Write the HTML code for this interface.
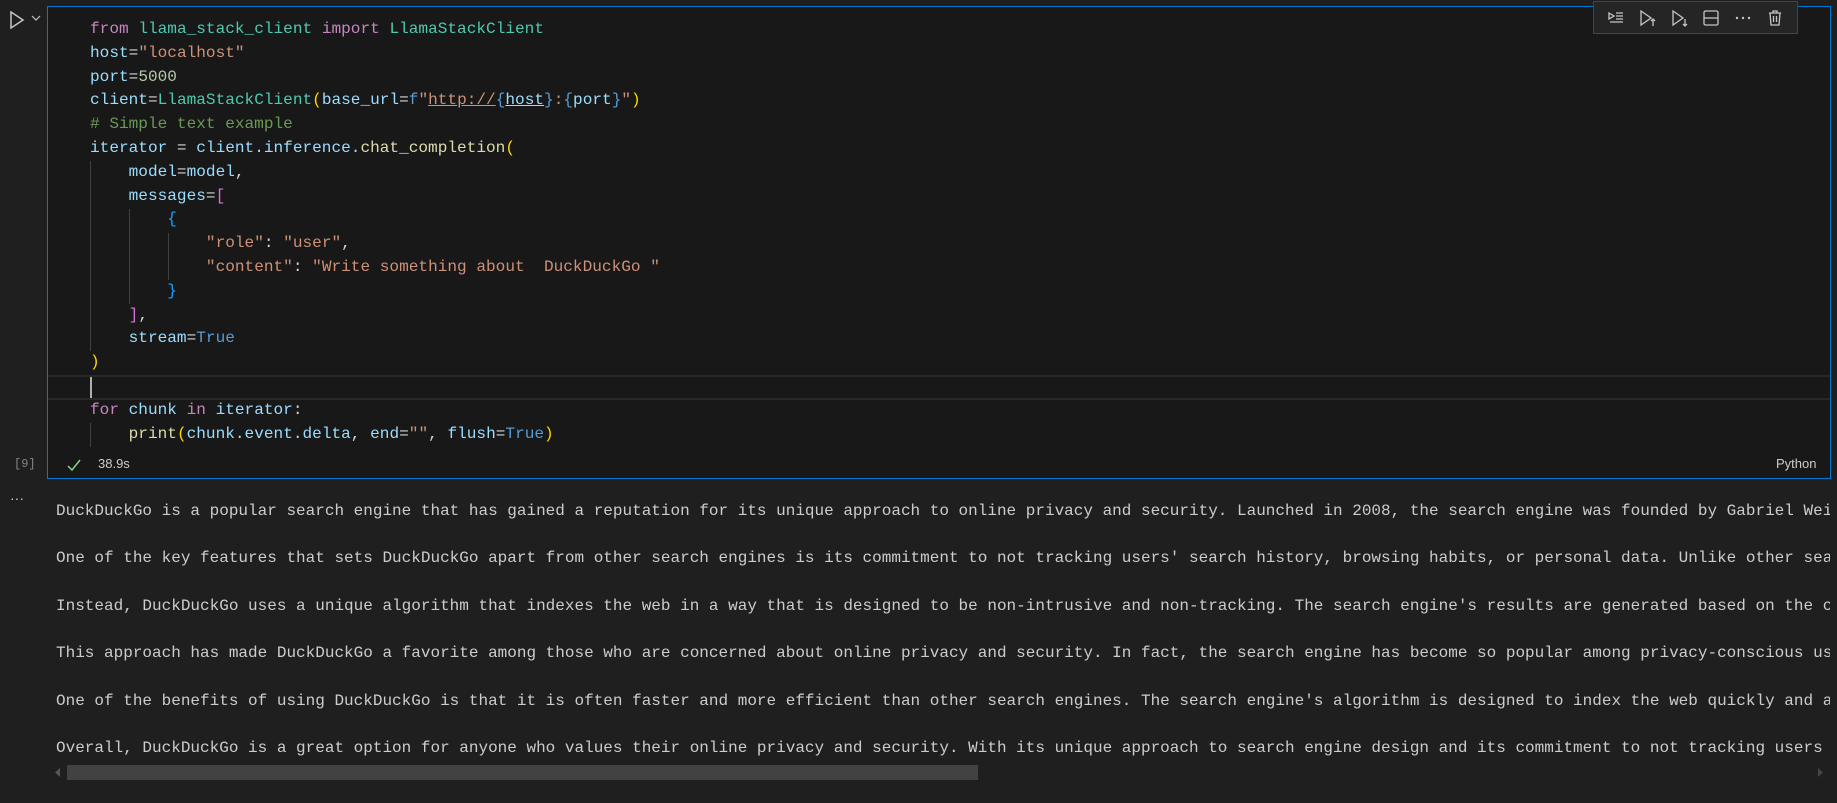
<!DOCTYPE html>
<html><head><meta charset="utf-8">
<style>
*{margin:0;padding:0;box-sizing:border-box}
body{width:1837px;height:803px;background:#1f1f1f;overflow:hidden;position:relative;font-family:"Liberation Mono",monospace}
.cell{position:absolute;left:47px;top:6px;width:1784px;height:473px;border:1px solid #0078d4;background:#181818}
.code{position:absolute;left:90px;top:18px;font-size:16.1px;line-height:23.8px;white-space:pre;color:#9cdcfe}
.k{color:#c586c0}.c{color:#4ec9b0}.s{color:#ce9178}.n{color:#b5cea8}.cm{color:#6a9955}.f{color:#dcdcaa}
.y{color:#ffd700}.p{color:#da70d6}.b{color:#179fff}.t{color:#569cd6}.o{color:#d4d4d4}
.u{text-decoration:underline}
.guide{position:absolute;width:1px;background:#404040}
.curline{position:absolute;left:48px;width:1782px;top:375px;height:25px;border-top:2px solid #282828;border-bottom:2px solid #282828}
.out{position:absolute;left:56px;top:488px;width:1774px;font-size:16.0px;line-height:47.4px;white-space:pre;color:#cccccc;overflow:hidden}
.tb{position:absolute;left:1593px;top:1px;width:205px;height:33px;background:#252526;border:1px solid #454545;display:flex;align-items:center;justify-content:space-around;padding:0 6px}
.tb svg{width:20px;height:20px}
.small{font-family:"Liberation Sans",sans-serif;font-size:13px;color:#cccccc;position:absolute}
</style></head><body>
<svg style="position:absolute;left:8px;top:10px" width="18" height="20" viewBox="0 0 18 20"><path d="M3 2 L15 10 L3 18 Z" fill="none" stroke="#c5c5c5" stroke-width="1.5"/></svg>
<svg style="position:absolute;left:31px;top:14px" width="10" height="8" viewBox="0 0 10 8"><path d="M1 2 L5 6 L9 2" fill="none" stroke="#c5c5c5" stroke-width="1.2"/></svg>
<div class="cell"></div>
<div class="curline"></div>
<div style="position:absolute;left:90px;top:377px;width:2px;height:21px;background:#aeafad"></div>
<div class="guide" style="left:90px;top:161px;height:190px"></div>
<div class="guide" style="left:129px;top:209px;height:95px"></div>
<div class="guide" style="left:168px;top:233px;height:47px"></div>
<div class="guide" style="left:90px;top:423px;height:24px"></div>
<div class="code"><span class="k">from</span> <span class="c">llama_stack_client</span> <span class="k">import</span> <span class="c">LlamaStackClient</span>
host<span class="o">=</span><span class="s">"localhost"</span>
port<span class="o">=</span><span class="n">5000</span>
client<span class="o">=</span><span class="c">LlamaStackClient</span><span class="y">(</span>base_url<span class="o">=</span><span class="t">f</span><span class="s">"<span class="u">http://</span></span><span class="t">{</span><span class="u">host</span><span class="t">}</span><span class="s">:</span><span class="t">{</span>port<span class="t">}</span><span class="s">"</span><span class="y">)</span>
<span class="cm"># Simple text example</span>
iterator <span class="o">=</span> client.inference.<span class="f">chat_completion</span><span class="y">(</span>
    model<span class="o">=</span>model<span class="o">,</span>
    messages<span class="o">=</span><span class="p">[</span>
        <span class="b">{</span>
            <span class="s">"role"</span><span class="o">:</span> <span class="s">"user"</span><span class="o">,</span>
            <span class="s">"content"</span><span class="o">:</span> <span class="s">"Write something about  DuckDuckGo "</span>
        <span class="b">}</span>
    <span class="p">]</span><span class="o">,</span>
    stream<span class="o">=</span><span class="t">True</span>
<span class="y">)</span>

<span class="k">for</span> chunk <span class="k">in</span> iterator<span class="o">:</span>
    <span class="f">print</span><span class="y">(</span>chunk.event.delta<span class="o">,</span> end<span class="o">=</span><span class="s">""</span><span class="o">,</span> flush<span class="o">=</span><span class="t">True</span><span class="y">)</span></div>
<div class="tb">
<svg viewBox="0 0 20 20"><path d="M3 5 L8 8 L3 11 Z M10 5 H17 M10 8 H17 M10 11 H17 M4 14 H17" fill="none" stroke="#c5c5c5" stroke-width="1.3"/></svg>
<svg viewBox="0 0 20 20"><path d="M3 3 L13 10 L3 17 Z M15 18 V11 M13 13 L15 11 L17 13" fill="none" stroke="#c5c5c5" stroke-width="1.3"/></svg>
<svg viewBox="0 0 20 20"><path d="M3 3 L13 10 L3 17 Z M15 11 V18 M13 16 L15 18 L17 16" fill="none" stroke="#c5c5c5" stroke-width="1.3"/></svg>
<svg viewBox="0 0 20 20"><rect x="3" y="3" width="14" height="14" rx="1.5" fill="none" stroke="#c5c5c5" stroke-width="1.3"/><path d="M3 10 H17" stroke="#c5c5c5" stroke-width="1.3"/></svg>
<svg viewBox="0 0 20 20"><circle cx="4" cy="10" r="1.2" fill="#c5c5c5"/><circle cx="10" cy="10" r="1.2" fill="#c5c5c5"/><circle cx="16" cy="10" r="1.2" fill="#c5c5c5"/></svg>
<svg viewBox="0 0 20 20"><path d="M4 5 H16 M8 5 V3 H12 V5 M5 5 L6 17 H14 L15 5 M8.5 8 V14 M11.5 8 V14" fill="none" stroke="#c5c5c5" stroke-width="1.3"/></svg>
</div>
<div class="small" style="left:14px;top:457px;font-family:'Liberation Mono',monospace;font-size:12px;color:#858585">[9]</div>
<svg style="position:absolute;left:66px;top:457px" width="16" height="16" viewBox="0 0 16 16"><path d="M2 9 L6 13 L14 3" fill="none" stroke="#89d185" stroke-width="1.5"/></svg>
<div class="small" style="left:98px;top:456px">38.9s</div>
<div class="small" style="left:1776px;top:456px">Python</div>
<div class="small" style="left:10px;top:490px;font-size:14px">···</div>
<div class="out">DuckDuckGo is a popular search engine that has gained a reputation for its unique approach to online privacy and security. Launched in 2008, the search engine was founded by Gabriel Weinberg
One of the key features that sets DuckDuckGo apart from other search engines is its commitment to not tracking users' search history, browsing habits, or personal data. Unlike other search engines
Instead, DuckDuckGo uses a unique algorithm that indexes the web in a way that is designed to be non-intrusive and non-tracking. The search engine's results are generated based on the content
This approach has made DuckDuckGo a favorite among those who are concerned about online privacy and security. In fact, the search engine has become so popular among privacy-conscious users
One of the benefits of using DuckDuckGo is that it is often faster and more efficient than other search engines. The search engine's algorithm is designed to index the web quickly and accurately
Overall, DuckDuckGo is a great option for anyone who values their online privacy and security. With its unique approach to search engine design and its commitment to not tracking users data</div>
<div style="position:absolute;left:67px;top:765px;width:911px;height:15px;background:#424242"></div>
<svg style="position:absolute;left:55px;top:768px" width="6" height="9" viewBox="0 0 6 9"><path d="M5 0 L0 4.5 L5 9 Z" fill="#555"/></svg>
<svg style="position:absolute;left:1818px;top:768px" width="6" height="9" viewBox="0 0 6 9"><path d="M0 0 L5 4.5 L0 9 Z" fill="#444"/></svg>
</body></html>
